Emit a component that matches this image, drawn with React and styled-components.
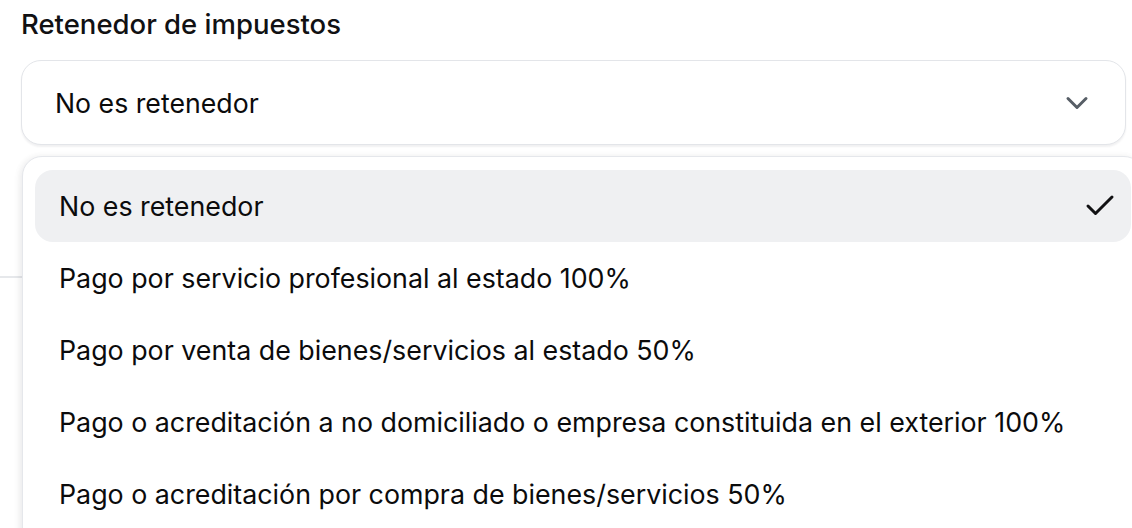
import React from "react";
import styled, { createGlobalStyle } from "styled-components";

const Global = createGlobalStyle`
  html, body { margin: 0; padding: 0; background: #ffffff; }
  body {
    font-family: Inter, "Noto Sans", "Liberation Sans", sans-serif;
    color: #0b0b0c;
    overflow: hidden;
    width: 1132px;
    height: 528px;
  }
  * { box-sizing: border-box; }
`;

const Page = styled.div`
  position: relative;
  width: 1132px;
  height: 528px;
  overflow: hidden;
`;

const Field = styled.div`
  display: flex;
  flex-direction: column;
  padding: 6px 6px 0 21px;
  gap: 18px;
`;

const Label = styled.label`
  font-size: 27.5px;
  font-weight: 500;
  line-height: 36px;
  color: #111113;
`;

const Trigger = styled.button`
  display: flex;
  align-items: center;
  justify-content: space-between;
  height: 85px;
  width: 1105px;
  padding: 0 30px 0 33px;
  border: 1px solid #e3e5e9;
  border-radius: 20px;
  background: #ffffff;
  box-shadow: 0 2px 2px rgba(16, 24, 40, 0.06);
  font-family: inherit;
  font-size: 26.7px;
  color: #0b0b0c;
  cursor: pointer;
  text-align: left;
`;

const Divider = styled.div`
  margin-top: 131px;
  height: 2px;
  width: 100%;
  background: #e6e8eb;
`;

const Popup = styled.div`
  position: absolute;
  top: 156px;
  left: 22px;
  width: 1122px;
  height: 420px;
  padding: 13px 12px;
  background: #ffffff;
  border: 1px solid #e5e7eb;
  border-radius: 20px;
  box-shadow: -2px 0 6px rgba(16, 24, 40, 0.05), 0 4px 12px rgba(16, 24, 40, 0.06);
  display: flex;
  flex-direction: column;
`;

const Option = styled.div`
  display: flex;
  align-items: center;
  justify-content: space-between;
  height: 72px;
  padding: 0 13px 0 24px;
  border-radius: 18px;
  background: ${(p) => (p.$selected ? "#eff0f2" : "transparent")};
  font-size: 26.8px;
  color: #0b0b0c;
  white-space: nowrap;
`;

const Icon = styled.svg`
  flex: none;
  fill: none;
  stroke: ${(p) => p.$color};
  stroke-width: 2;
  stroke-linecap: round;
  stroke-linejoin: round;
`;

const options = [
  "No es retenedor",
  "Pago por servicio profesional al estado 100%",
  "Pago por venta de bienes/servicios al estado 50%",
  "Pago o acreditación a no domiciliado o empresa constituida en el exterior 100%",
  "Pago o acreditación por compra de bienes/servicios 50%",
];

export default function App() {
  return (
    <Page>
      <Global />
      <Field>
        <Label>Retenedor de impuestos</Label>
        <Trigger>
          <span>No es retenedor</span>
          <Icon $color="#575e66" width="36" height="36" viewBox="0 0 24 24">
            <path d="m6 9 6 6 6-6" />
          </Icon>
        </Trigger>
      </Field>
      <Divider />
      <Popup>
        {options.map((o, i) => (
          <Option key={o} $selected={i === 0}>
            <span>{o}</span>
            {i === 0 && (
              <Icon $color="#111113" width="36" height="36" viewBox="0 0 24 24">
                <path d="M20 6 9 17l-5-5" />
              </Icon>
            )}
          </Option>
        ))}
      </Popup>
    </Page>
  );
}
